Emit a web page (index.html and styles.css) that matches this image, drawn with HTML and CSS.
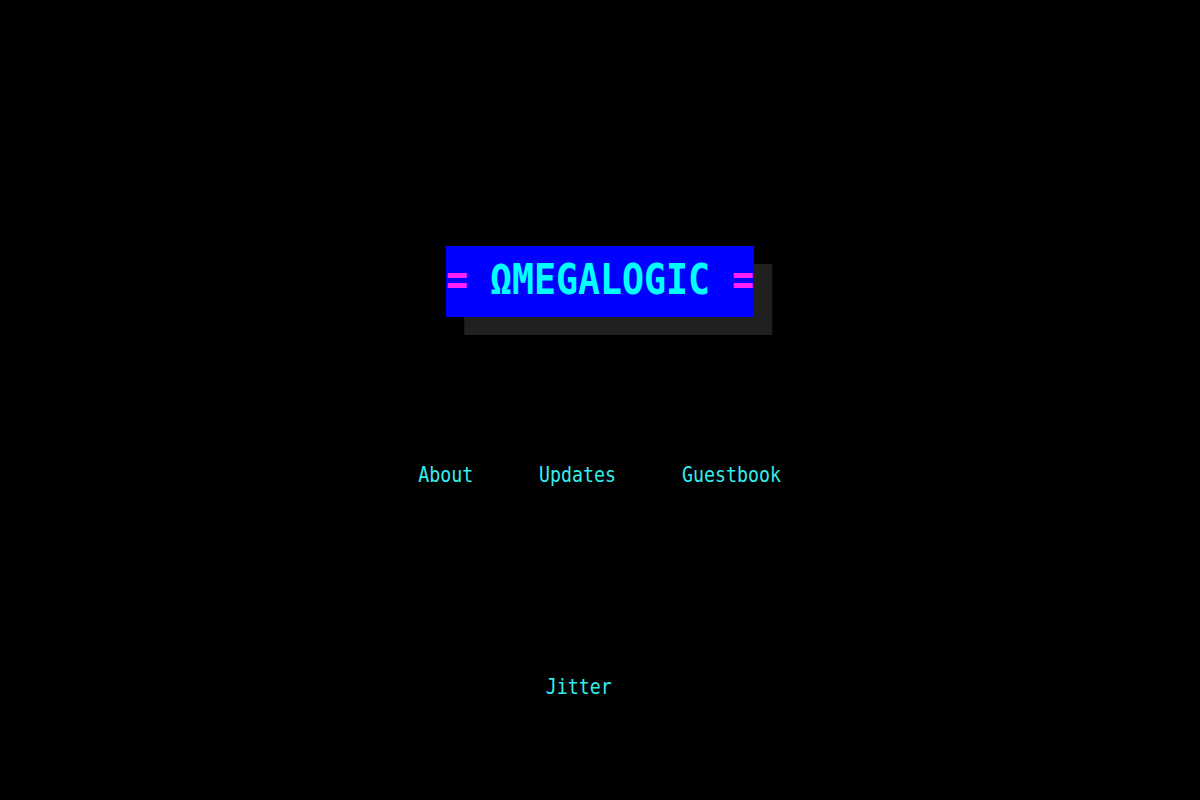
FILE: index.html
```html
<!DOCTYPE html>
<html>
<head>
<meta charset="utf-8">
<title>ΩMEGALOGIC</title>
<link rel="stylesheet" href="styles.css">
</head>
<body>
<main class="page">
  <header class="masthead">
    <h1 class="logo"><span class="eq">=</span> ΩMEGALOGIC <span class="eq">=</span></h1>
  </header>
  <nav class="nav">
    <a class="nav-link" href="#about">About</a>
    <a class="nav-link" href="#updates">Updates</a>
    <a class="nav-link" href="#guestbook">Guestbook</a>
  </nav>
  <footer class="footer">
    <a class="footer-link" href="#jitter">Jitter</a>
  </footer>
</main>
</body>
</html>
```
FILE: styles.css
```css
html, body {
  margin: 0;
  padding: 0;
  background: #000;
  height: 100%;
}
body {
  font-family: "DejaVu Sans Mono", "Liberation Mono", monospace;
  color: #33eeee;
}
.page {
  display: flex;
  flex-direction: column;
  align-items: center;
  padding-top: 246px;
}
.masthead {
  display: flex;
  justify-content: center;
}
.logo {
  margin: 0;
  display: inline-block;
  background: #0000ff;
  color: #00ffff;
  font-family: "DejaVu Sans Mono", monospace;
  font-weight: bold;
  font-size: 42px;
  line-height: 67px;
  padding-bottom: 4px;
  white-space: pre;
  transform: scaleX(0.87);
  box-shadow: 21px 18px 0 #202020;
}
.eq {
  color: #ff22ff;
}
.nav {
  margin-top: 144px;
  display: flex;
  gap: 79.5px;
  transform: scaleX(0.83);
}
.nav-link, .footer-link {
  color: #33eeee;
  text-decoration: none;
  font-size: 22px;
  line-height: 28px;
}
.footer {
  margin-top: 184px;
  margin-right: 42px;
  transform: scaleX(0.83);
}
```
